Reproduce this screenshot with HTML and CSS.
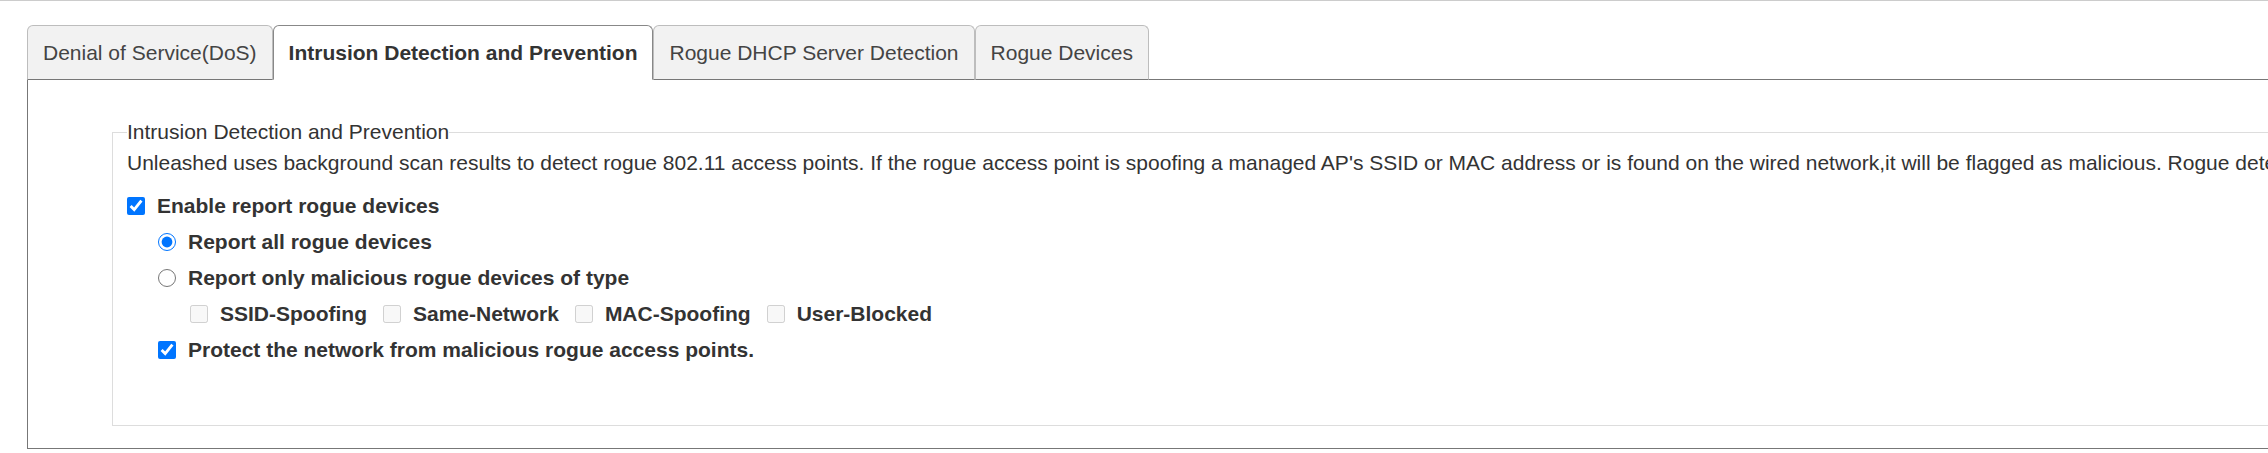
FILE: index.html
```html
<!DOCTYPE html>
<html lang="en">
<head>
<meta charset="utf-8">
<title>Intrusion Detection and Prevention</title>
<link rel="stylesheet" href="styles.css">
</head>
<body>
<div class="page">
  <ul class="tabs">
    <li class="tab">Denial of Service(DoS)</li>
    <li class="tab active">Intrusion Detection and Prevention</li>
    <li class="tab">Rogue DHCP Server Detection</li>
    <li class="tab">Rogue Devices</li>
  </ul>
  <div class="tab-content">
    <fieldset class="group">
      <legend class="group-title">Intrusion Detection and Prevention</legend>
      <p class="desc">Unleashed uses background scan results to detect rogue 802.11 access points. If the rogue access point is spoofing a managed AP's SSID or MAC address or is found on the wired network,it will be flagged as malicious. Rogue detection is performed on the background scan channels.</p>
      <label class="row"><input type="checkbox" checked><span>Enable report rogue devices</span></label>
      <label class="row indent1"><input type="radio" name="rtype" checked><span>Report all rogue devices</span></label>
      <label class="row indent1"><input type="radio" name="rtype"><span>Report only malicious rogue devices of type</span></label>
      <div class="row indent2">
        <label class="opt"><input type="checkbox" disabled><span>SSID-Spoofing</span></label>
        <label class="opt"><input type="checkbox" disabled><span>Same-Network</span></label>
        <label class="opt"><input type="checkbox" disabled><span>MAC-Spoofing</span></label>
        <label class="opt"><input type="checkbox" disabled><span>User-Blocked</span></label>
      </div>
      <label class="row indent1"><input type="checkbox" checked><span>Protect the network from malicious rogue access points.</span></label>
    </fieldset>
  </div>
</div>
</body>
</html>
```
FILE: styles.css
```css
html, body {
  margin: 0;
  padding: 0;
  overflow: hidden;
  background: #fff;
}

body {
  font-family: "Liberation Sans", Arial, sans-serif;
  font-size: 21px;
  color: #333;
}

.page {
  border-top: 1px solid #ccc;
  padding: 24px 0 0 27px;
  width: max-content;
}

.tabs {
  display: flex;
  list-style: none;
  margin: 0;
  padding: 0;
}

.tab {
  position: relative;
  z-index: 1;
  margin: 0 0 -1px 0;
  padding: 12px 15px 11px;
  line-height: 30px;
  border: 1px solid #bdbdbd;
  border-bottom: 1px solid #777;
  border-radius: 6px 6px 0 0;
  background: #f2f2f2;
  color: #444;
  white-space: nowrap;
}

.tab.active {
  background: #fff;
  border-color: #888;
  border-bottom-color: #fff;
  font-weight: bold;
  color: #333;
}

.tab-content {
  border: 1px solid #777;
  padding: 40px 60px 22px 84px;
}

.group {
  margin: 0;
  border: 1px solid #ddd;
  padding: 4px 14px 57px;
}

.group-title {
  padding: 0;
  line-height: 24px;
  font-size: 21px;
  color: #333;
}

.desc {
  margin: 0 0 10px;
  line-height: 30px;
  white-space: nowrap;
}

.row {
  display: flex;
  align-items: center;
  height: 36px;
  font-weight: bold;
  white-space: nowrap;
}

.row input,
.opt input {
  width: 18px;
  height: 18px;
  margin: 0 12px 0 0;
  flex: none;
}

.indent1 {
  padding-left: 31px;
}

.indent2 {
  padding-left: 63px;
}

.opt {
  display: inline-flex;
  align-items: center;
  margin-right: 16px;
}
```
